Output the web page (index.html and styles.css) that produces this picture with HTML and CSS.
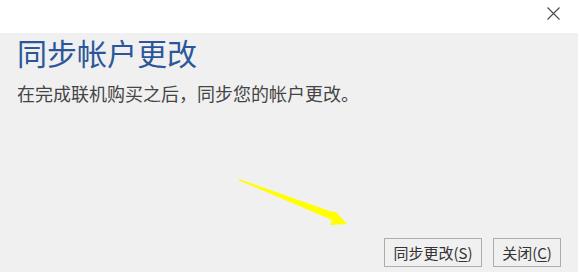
FILE: index.html
```html
<!DOCTYPE html>
<html lang="zh-CN">
<head>
<meta charset="utf-8">
<title>同步帐户更改</title>
<link rel="stylesheet" href="styles.css">
</head>
<body>
<div class="dialog">
  <div class="header">
    <button class="close" aria-label="关闭">
      <svg width="13" height="13" viewBox="0 0 13 13"><path d="M0.5 0.5 L12.5 12.5 M12.5 0.5 L0.5 12.5" stroke="#4a4a4a" stroke-width="1.1" fill="none"/></svg>
    </button>
  </div>
  <div class="content">
    <h1 class="title">同步帐户更改</h1>
    <p class="desc">在完成联机购买之后，同步您的帐户更改。</p>
    <div class="actions">
      <button class="btn btn-sync">同步更改(<u>S</u>)</button>
      <button class="btn btn-close">关闭(<u>C</u>)</button>
    </div>
    <svg class="arrow" width="120" height="50" viewBox="0 0 120 50">
      <polygon points="0,0 92,32.5 97,33 108,45 91,46 93,41 0,1.5" fill="#ffff00"/>
    </svg>
  </div>
</div>
</body>
</html>
```
FILE: styles.css
```css
* { box-sizing: border-box; }
html, body { margin: 0; padding: 0; }
body {
  width: 579px;
  height: 272px;
  overflow: hidden;
  font-family: "Noto Sans", "Noto Sans CJK SC", sans-serif;
  background: #ffffff;
}
.dialog {
  width: 579px;
  height: 272px;
  display: flex;
  flex-direction: column;
}
.header {
  height: 33px;
  background: #ffffff;
  display: flex;
  justify-content: flex-end;
  align-items: flex-start;
  padding: 7px 19px 0 0;
}
.close {
  border: 0;
  background: transparent;
  padding: 0;
  width: 13px;
  height: 13px;
  display: block;
}
.close svg { display: block; }
.content {
  flex: 1;
  background: #f0f0f0;
  border-right: 1px solid #ffffff;
  padding: 0 17px 5px 17px;
  display: flex;
  flex-direction: column;
  position: relative;
}
.title {
  margin: 4px 0 0 0;
  font-family: "Noto Sans CJK SC", sans-serif;
  font-weight: 400;
  font-size: 30px;
  line-height: 30px;
  color: #2b579a;
}
.desc {
  margin: 17px 0 0 0;
  font-family: "Noto Sans CJK SC", sans-serif;
  font-size: 18px;
  line-height: 18px;
  color: #444444;
}
.actions {
  margin-top: auto;
  display: flex;
  justify-content: flex-end;
  gap: 11px;
}
.btn {
  height: 29px;
  border: 1px solid #adadad;
  background: #f0f0f0;
  font-family: "Noto Sans CJK SC", sans-serif;
  font-size: 15px;
  line-height: 27px;
  color: #333333;
  padding: 0;
}
.btn u { text-decoration-thickness: 1px; text-underline-offset: 2px; }
.btn-sync { width: 98px; }
.btn-close { width: 68px; }
.arrow {
  position: absolute;
  left: 239px;
  top: 146px;
}
```
